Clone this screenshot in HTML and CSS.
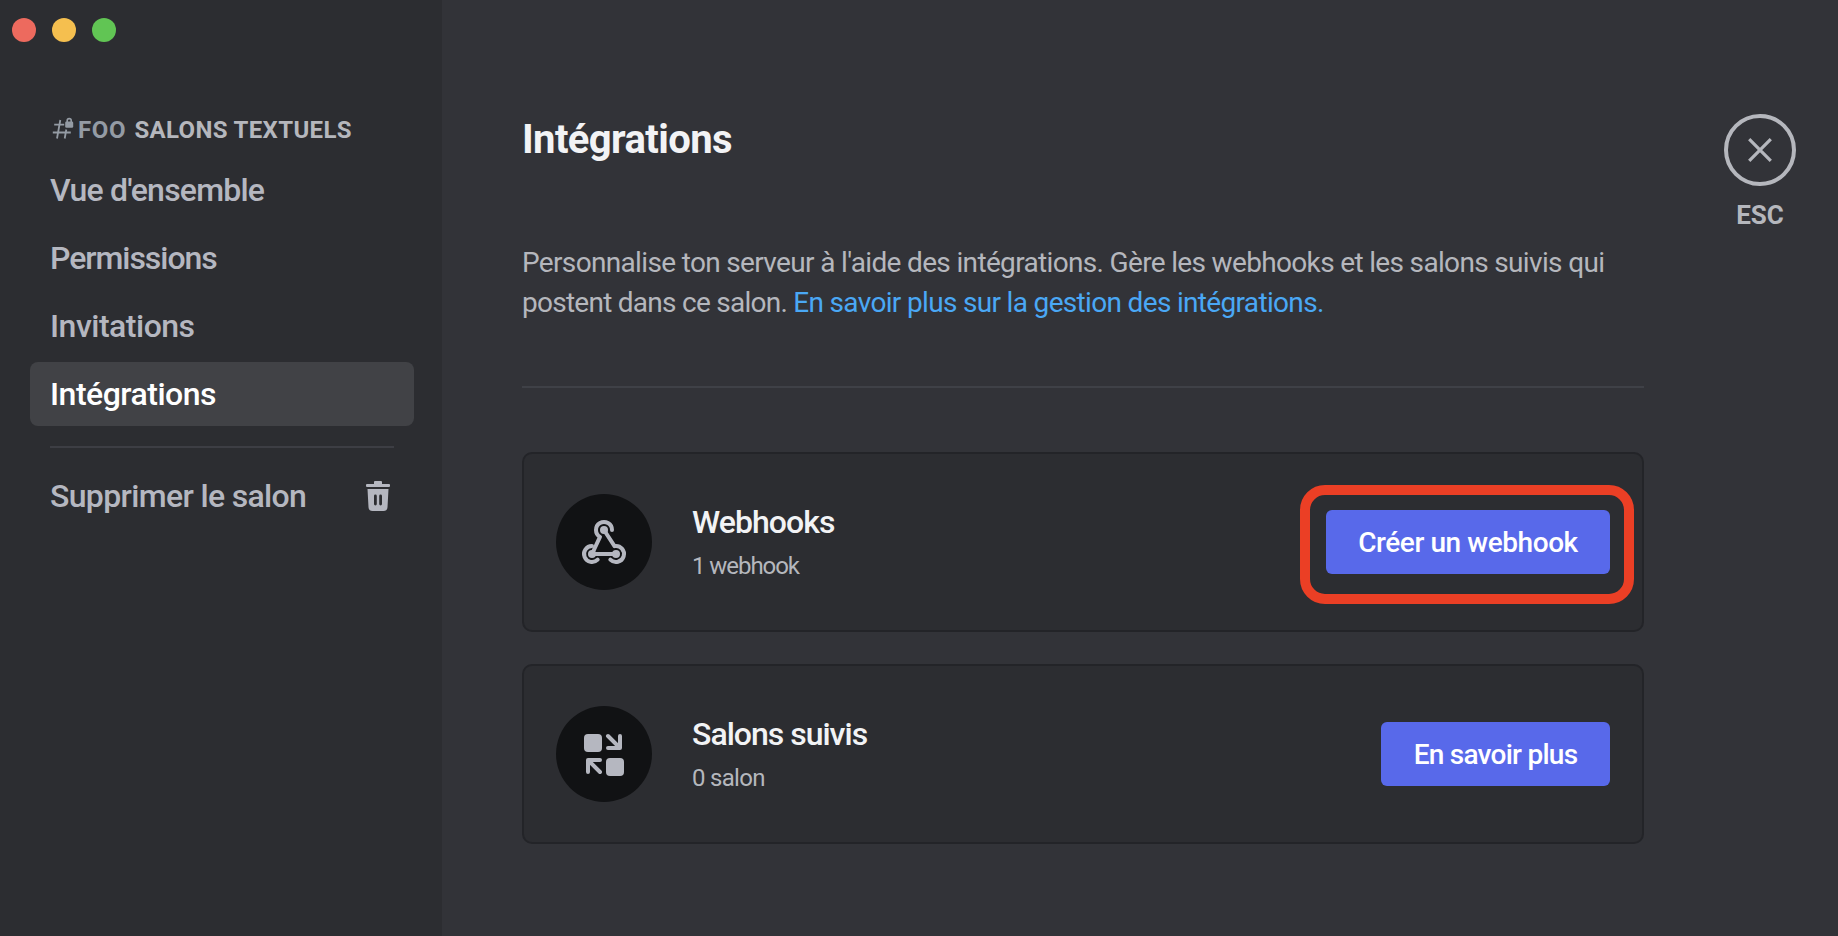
FILE: index.html
```html
<!DOCTYPE html>
<html lang="fr">
<head>
<meta charset="utf-8">
<title>Intégrations</title>
<link rel="stylesheet" href="styles.css">
</head>
<body>
<div class="app">
  <aside class="sidebar">
    <div class="traffic"><i class="dot red"></i><i class="dot yellow"></i><i class="dot green"></i></div>
    <div class="section-title">
      <svg class="hash" width="22" height="24" viewBox="0 0 22 24"><path d="M8.3 3 5 21.500M14.300 12.500 12.700 21.500M2.200 7.700h10M.8 15.500h18" fill="none" stroke="#949ba4" stroke-width="1.800"/><path d="M15.200 5V3.600a2 2 0 0 1 4 0V5" fill="none" stroke="#949ba4" stroke-width="1.600"/><rect x="13.200" y="4.500" width="8" height="6.200" rx="1.300" fill="#949ba4"/></svg>
      <span class="channel">FOO</span><span class="group">SALONS TEXTUELS</span>
    </div>
    <nav class="nav">
      <a class="item"><span class="t-vue">Vue d'ensemble</span></a>
      <a class="item"><span class="t-perm">Permissions</span></a>
      <a class="item"><span class="t-inv">Invitations</span></a>
      <a class="item active"><span class="t-int">Intégrations</span></a>
    </nav>
    <div class="rule"></div>
    <a class="item"><span class="t-sup">Supprimer le salon</span>
      <svg class="trash" width="24" height="30" viewBox="0 0 24 30"><path fill="#b5b7c0" fill-rule="evenodd" d="M8 1a1 1 0 0 1 1-1h6a1 1 0 0 1 1 1v2h7a1 1 0 0 1 1 1v1a1 1 0 0 1-1 1H1a1 1 0 0 1-1-1V4a1 1 0 0 1 1-1h7zM1.500 8h21l-1 18.200a4 4 0 0 1-4 3.800H6.500a4 4 0 0 1-4-3.800zM8 15v8a1.400 1.400 0 0 0 2.800 0v-8A1.400 1.400 0 0 0 8 15zM13.200 15v8a1.400 1.400 0 0 0 2.800 0v-8a1.400 1.400 0 0 0-2.800 0z"/></svg>
    </a>
  </aside>
  <main class="content">
    <h1><span class="t-h1">Intégrations</span></h1>
    <p class="intro"><span class="l1">Personnalise ton serveur à l'aide des intégrations. Gère les webhooks et les salons suivis qui</span><br><span class="l2">postent dans ce salon. </span><a class="l3">En savoir plus sur la gestion des intégrations.</a></p>
    <div class="divider"></div>
    <section class="card">
      <div class="icon"><svg width="48" height="48" viewBox="0 0 48 48"><g fill="none" stroke="#b5b7c0" stroke-width="4" stroke-linecap="round" stroke-linejoin="round"><path d="M12 36 20 18.930A8 8 0 1 1 32 12"/><path d="M24 12 34.500 28.140A8 8 0 1 1 30.340 41.660"/><path d="M36 36H12"/><path d="M17.660 41.660A8 8 0 1 1 12 28"/></g><g fill="#b5b7c0"><circle cx="24" cy="12" r="4"/><circle cx="12" cy="36" r="4"/><circle cx="36" cy="36" r="4"/></g></svg></div>
      <div class="info"><h2><span class="t-web">Webhooks</span></h2><div class="count"><span class="t-1w">1 webhook</span></div></div>
      <button class="btn create"><span class="t-create">Créer un webhook</span></button>
      <div class="highlight"></div>
    </section>
    <section class="card">
      <div class="icon"><svg width="48" height="48" viewBox="0 0 48 48"><g fill="#b5b7c0"><rect x="4" y="4" width="18" height="18" rx="4"/><rect x="26" y="28" width="18" height="18" rx="4"/></g><g fill="none" stroke="#b5b7c0" stroke-width="4" stroke-linecap="round" stroke-linejoin="round"><path d="M28 6 39.500 17.500M28 18h12V6M20 42 8.500 30.500M20 30H8v12"/></g></svg></div>
      <div class="info"><h2><span class="t-sal">Salons suivis</span></h2><div class="count"><span class="t-0s">0 salon</span></div></div>
      <button class="btn more"><span class="t-more">En savoir plus</span></button>
    </section>
  </main>
  <div class="close">
    <svg width="72" height="72" viewBox="0 0 72 72" fill="none" stroke="#b5b7bd"><circle cx="36" cy="36" r="34" stroke-width="4"/><path d="M25.200 25.200l21.600 21.600M46.800 25.200 25.200 46.800" stroke-width="3.200"/></svg>
    <span class="esc">ESC</span>
  </div>
</div>
</body>
</html>
```
FILE: styles.css
```css
* { box-sizing: border-box; }
body { margin: 0; background: #323338; font-family: Roboto, "Noto Sans", sans-serif; color: #b5b7bd; overflow: hidden; }
.app { display: flex; width: 1838px; height: 936px; }
span, .l3 { white-space: pre; }
.sidebar { width: 442px; height: 936px; background: #2c2d31; padding: 18px 28px 0 30px; flex: none; }
.traffic { display: flex; gap: 16px; margin-left: -18px; height: 24px; }
.dot { width: 24px; height: 24px; border-radius: 50%; }
.red { background: #ed6a5e; }
.yellow { background: #f5bf4f; }
.green { background: #61c554; }
.section-title { display: flex; align-items: center; height: 36px; margin: 70px 0 10px; padding-left: 22px; font-size: 24px; font-weight: 700; }
.hash { flex: none; margin-top: -2px; }
.channel { color: #949ba4; margin: 0 8px 0 4px; letter-spacing: 0.7px; }
.group { letter-spacing: 0.35px; }
.nav { display: flex; flex-direction: column; gap: 4px; }
.item { display: flex; align-items: center; justify-content: space-between; width: 384px; height: 64px; padding: 0 24px 0 20px; border-radius: 8px; font-size: 32px; font-weight: 500; color: #b5b7c0; }
.active { background: #414246; color: #fff; }
.rule { height: 2px; width: 344px; background: #3d3e44; margin: 20px 0 16px 20px; }
.t-vue { letter-spacing: -0.8px; }
.t-perm { letter-spacing: -1.05px; }
.t-inv { letter-spacing: -0.5px; }
.t-int { letter-spacing: -0.5px; }
.t-sup { letter-spacing: -0.65px; }
.content { width: 1122px; margin-left: 80px; padding-top: 115px; flex: none; }
h1 { margin: 0; font-size: 40px; line-height: 50px; font-weight: 700; color: #f2f3f5; }
.t-h1 { letter-spacing: -0.6px; }
.intro { margin: 78px 0 0; font-size: 28px; line-height: 40px; height: 80px; }
.l1 { letter-spacing: -0.66px; }
.l2 { letter-spacing: -0.74px; }
.l3 { color: #4aa8f5; letter-spacing: -0.67px; }
.divider { height: 2px; background: #3f4147; margin: 63px 0 64px; }
.card { position: relative; display: flex; align-items: center; height: 180px; padding: 0 32px; border: 2px solid #232428; border-radius: 10px; background: #2c2d31; margin-bottom: 32px; }
.icon { width: 96px; height: 96px; border-radius: 50%; background: #111214; display: flex; align-items: center; justify-content: center; flex: none; }
.info { margin-left: 40px; flex: 1; }
h2 { margin: 0; font-size: 32px; line-height: 40px; font-weight: 500; color: #f2f3f5; }
.count { font-size: 24px; line-height: 32px; margin-top: 8px; }
.t-web { letter-spacing: -0.95px; }
.t-sal { letter-spacing: -1px; }
.t-1w { letter-spacing: -1.05px; }
.t-0s { letter-spacing: -0.7px; }
.btn { height: 64px; padding: 2px 0 0; border: 0; border-radius: 6px; background: #5869ea; color: #fff; font: 500 28px/62px Roboto, sans-serif; text-align: center; }
.create { width: 284px; }
.more { width: 229px; }
.t-create { letter-spacing: -0.42px; }
.t-more { letter-spacing: -0.75px; }
.highlight { position: absolute; left: 776px; top: 31px; width: 334px; height: 119px; border: 10px solid #eb3f25; border-radius: 25px; }
.close { margin-left: 80px; padding-top: 114px; width: 72px; display: flex; flex-direction: column; align-items: center; }
.esc { font-size: 26px; font-weight: 700; line-height: 32px; margin-top: 13px; }
```
